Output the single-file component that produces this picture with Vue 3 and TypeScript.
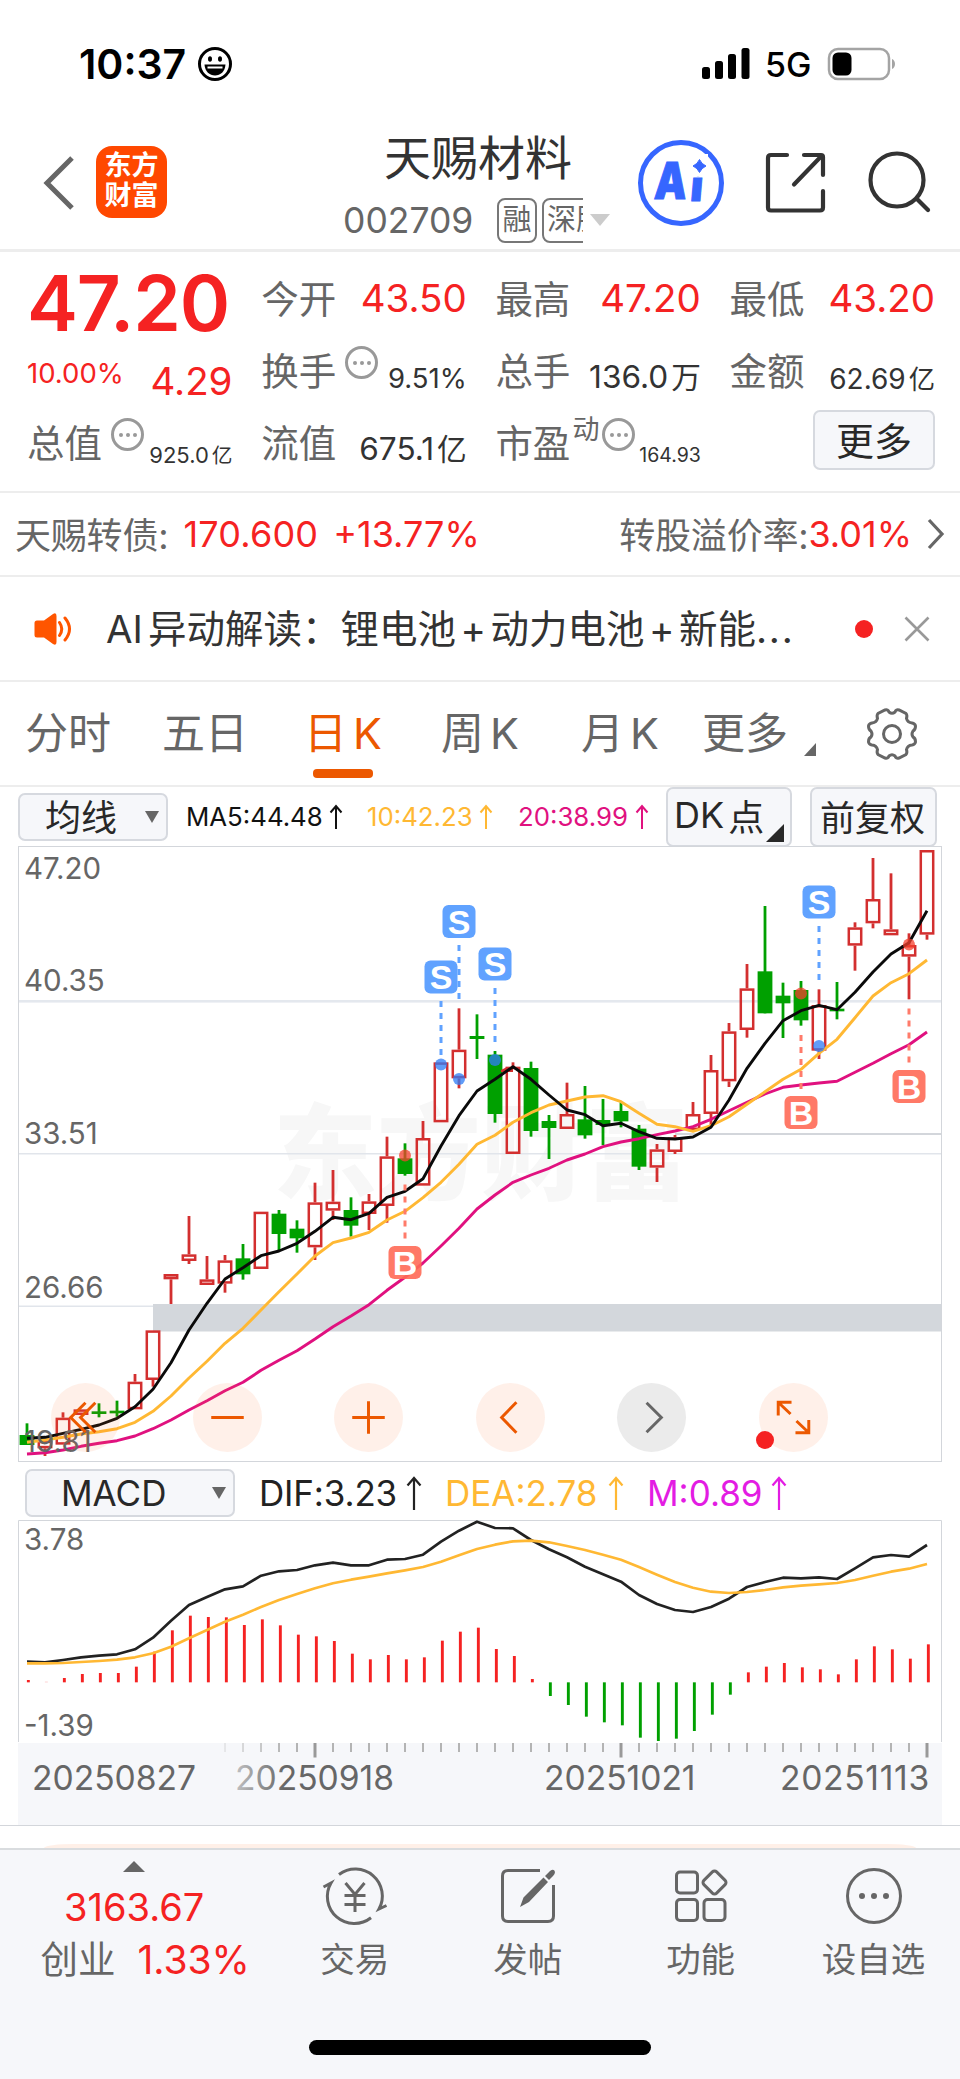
<script setup lang="ts">
type Candle = [string, number, number, number, number]

const X0 = 27
const STEP = 18
const px = (i: number): number => X0 + STEP * i
const py = (v: number): number => (v - 18) / 3
const my = (v: number): number => (v - 210) / 3

// kind, high, body top, body bottom, low (thirds of a pixel)
const candles: Candle[] = [
  ['g', 1750, 1785, 1815, 1815], ['r', 1800, 1802, 1825, 1848], ['r', 1717, 1733, 1814, 1814],
  ['r', 1708, 1708, 1725, 1725], ['g', 1690, 1714, 1722, 1732], ['g', 1682, 1712, 1720, 1730],
  ['r', 1602, 1625, 1708, 1708], ['r', 1471, 1471, 1620, 1640], ['r', 1302, 1302, 1318, 1392],
  ['r', 1128, 1243, 1263, 1272], ['r', 1248, 1318, 1335, 1335], ['r', 1245, 1261, 1331, 1358],
  ['g', 1212, 1255, 1303, 1319], ['r', 1115, 1115, 1287, 1287], ['g', 1110, 1121, 1182, 1230],
  ['g', 1141, 1166, 1195, 1238], ['r', 1028, 1087, 1222, 1260], ['r', 990, 1085, 1112, 1140],
  ['g', 1072, 1110, 1157, 1190], ['r', 1062, 1084, 1122, 1170], ['r', 890, 949, 1098, 1148],
  ['g', 910, 955, 1002, 1007], ['r', 843, 894, 1037, 1037], ['r', 667, 667, 847, 847],
  ['r', 505, 629, 715, 745], ['g', 523, 588, 597, 657], ['g', 633, 644, 822, 848],
  ['r', 667, 680, 942, 942], ['g', 665, 684, 873, 890], ['g', 825, 843, 864, 957],
  ['r', 728, 822, 867, 867], ['g', 738, 838, 886, 896], ['g', 777, 840, 855, 915],
  ['g', 787, 813, 844, 862], ['g', 855, 866, 980, 990], ['r', 912, 928, 983, 1026],
  ['r', 885, 892, 936, 942], ['r', 786, 822, 870, 870], ['r', 645, 690, 822, 858],
  ['r', 549, 574, 724, 741], ['r', 372, 445, 570, 593], ['g', 198, 394, 520, 520],
  ['g', 428, 467, 490, 594], ['g', 423, 450, 541, 557], ['r', 448, 495, 632, 657],
  ['g', 426, 506, 514, 538], ['r', 247, 262, 317, 392], ['r', 54, 177, 250, 265],
  ['r', 100, 268, 286, 286], ['r', 280, 315, 350, 478], ['r', 30, 30, 284, 299]
]

const ma5 = [1795, 1792, 1780, 1768, 1755, 1735, 1700, 1648, 1568, 1470, 1390, 1317, 1283, 1247, 1233, 1210, 1174, 1132, 1139, 1120, 1072, 1054, 1016, 918, 827, 753, 718, 680, 718, 765, 810, 824, 857, 850, 875, 895, 897, 891, 862, 780, 685, 610, 542, 512, 496, 509, 457, 396, 342, 308, 212]
const ma10 = [1807, 1800, 1792, 1782, 1775, 1766, 1747, 1714, 1668, 1614, 1564, 1510, 1465, 1410, 1355, 1302, 1248, 1208, 1194, 1177, 1140, 1114, 1073, 1027, 973, 913, 886, 847, 818, 795, 783, 771, 767, 785, 820, 853, 860, 874, 857, 830, 793, 755, 718, 688, 640, 598, 533, 468, 428, 401, 360]
const ma20 = [1842, 1838, 1830, 1819, 1810, 1802, 1788, 1766, 1740, 1710, 1682, 1652, 1627, 1591, 1561, 1532, 1497, 1460, 1428, 1394, 1351, 1312, 1269, 1218, 1165, 1107, 1065, 1027, 1005, 985, 960, 942, 920, 906, 896, 884, 873, 860, 838, 812, 787, 762, 742, 735, 729, 724, 697, 670, 641, 614, 576]
const dif = [635, 637, 630, 622, 617, 613, 598, 563, 512, 465, 441, 418, 409, 377, 364, 360, 346, 338, 346, 346, 329, 327, 314, 275, 242, 215, 234, 235, 270, 298, 322, 350, 373, 395, 435, 462, 480, 486, 471, 446, 411, 396, 383, 385, 382, 387, 355, 322, 315, 320, 285]
const dea = [640, 640, 639, 636, 633, 629, 622, 610, 590, 565, 540, 515, 494, 471, 450, 432, 415, 400, 389, 380, 370, 361, 351, 335, 316, 297, 284, 274, 272, 277, 288, 300, 314, 329, 351, 374, 396, 413, 425, 429, 426, 420, 412, 407, 403, 399, 390, 377, 365, 356, 342]
const bars = [690, 695, 684, 672, 669, 669, 650, 605, 541, 497, 501, 502, 525, 508, 526, 554, 559, 573, 611, 628, 615, 628, 622, 572, 545, 533, 597, 618, 687, 738, 765, 800, 817, 826, 863, 873, 866, 843, 794, 734, 667, 650, 639, 652, 658, 673, 628, 589, 598, 626, 583]
const BASE = 697

const line = (vals: number[], f: (v: number) => number): string =>
  vals.map((v, i) => `${px(i)},${f(v).toFixed(1)}`).join(' ')

interface Marker { k: string; x: number; y: number; from: number; dot: number }
const markers: Marker[] = [
  { k: 'S', x: 441, y: 131, from: 155, dot: 218.5 },
  { k: 'S', x: 459, y: 75.5, from: 99, dot: 233 },
  { k: 'S', x: 495, y: 118, from: 142, dot: 214 },
  { k: 'S', x: 819, y: 56, from: 80, dot: 200 },
  { k: 'B', x: 405, y: 416.5, from: 338.5, dot: 309.5 },
  { k: 'B', x: 801, y: 266.5, from: 189, dot: 147.5 },
  { k: 'B', x: 909, y: 240.5, from: 162.5, dot: 98.5 }
]

const ticks = Array.from({ length: 40 }, (_, k) => k + 11)
const tall = (i: number): boolean => i === 16 || i === 33 || i === 50

const tabs = [
  { t: '分时', c: 'a' }, { t: '五日', c: 'b' }, { t: '日', s: 'K', c: 'c' },
  { t: '周', s: 'K', c: 'd' }, { t: '月', s: 'K', c: 'e' }, { t: '更多', c: 'f' }
]
</script>

<template>
  <div class="page">
    <div class="status">
      <span class="time">10:37</span>
      <svg class="smile" width="36" height="36" viewBox="0 0 36 36">
        <circle cx="18" cy="18" r="15.5" fill="none" stroke="#000" stroke-width="3" />
        <ellipse cx="13" cy="13" rx="2" ry="2.8" /><ellipse cx="23" cy="13" rx="2" ry="2.8" />
        <path d="M7.5 18.5h21c-.5 7-5 11-10.5 11S8 25.5 7.5 18.500z" /><path d="M10.500 21.500h15" stroke="#fff" stroke-width="2" />
      </svg>
      <svg class="signal" width="50" height="32" viewBox="0 0 50 32">
        <rect x="1" y="19" width="8" height="12" rx="2.500" /><rect x="14" y="13" width="8" height="18" rx="2.500" />
        <rect x="27" y="6" width="8" height="25" rx="2.500" /><rect x="40.500" y="0" width="8" height="31" rx="2.500" />
      </svg>
      <span class="net">5G</span>
      <svg class="battery" width="70" height="34" viewBox="0 0 70 34">
        <rect x="2" y="2" width="60" height="30" rx="9" fill="none" stroke="#a4a4a4" stroke-width="2.500" />
        <rect x="5.500" y="5.500" width="19" height="23" rx="5.500" />
        <path d="M65 12c4 1.500 4 8.500 0 10z" fill="#a4a4a4" />
      </svg>
    </div>

    <div class="header">
      <svg class="back" width="40" height="60" viewBox="0 0 40 60">
        <path d="M31 6L6 31L31 56" fill="none" stroke="#666" stroke-width="5" />
      </svg>
      <div class="logo"><span>东方</span><span>财富</span></div>
      <div class="title">
        <div class="name">天赐材料</div>
        <div class="code">
          <span class="num">002709</span>
          <span class="tag">融</span>
          <span class="clip"><span class="tag">深股</span></span>
          <i class="drop"></i>
        </div>
      </div>
      <svg class="ai" width="88" height="88" viewBox="0 0 88 88">
        <circle cx="44" cy="44" r="40.500" fill="none" stroke="#3666ff" stroke-width="5" />
        <text transform="translate(16.500 60) skewX(-4) scale(0.800 1)" class="aitext">A</text>
        <text transform="translate(52.500 61.500) skewX(-5)" class="aitext sm">i</text>
        <rect x="51" y="15" width="20" height="22" fill="#fff" />
        <path d="M62.500 20.500Q64.500 25 69 27Q64.500 29 62.500 33.500Q60.500 29 56 27Q60.500 25 62.500 20.500z" fill="#3666ff" stroke="#3666ff" />
      </svg>
      <svg class="share" width="64" height="64" viewBox="0 0 64 64" fill="none" stroke="#333" stroke-width="4.200" stroke-linecap="round">
        <path d="M23 4H7Q4 4 4 7V56.500Q4 59.500 7 59.500H56Q59 59.500 59 56.500V40" /><path d="M40 4H57Q59 4 59 6V24M57 5.500L30 33.500" />
      </svg>
      <svg class="search" width="66" height="64" viewBox="0 0 66 64" fill="none" stroke="#333" stroke-width="4.200" stroke-linecap="round">
        <circle cx="30" cy="31" r="26.500" /><path d="M50 50L61 61" />
      </svg>
    </div>

    <div class="quote">
      <div class="cell big"><b>47.20</b></div>
      <div class="cell"><span class="lb">今开</span><span class="v red">43.50</span></div>
      <div class="cell"><span class="lb">最高</span><span class="v red">47.20</span></div>
      <div class="cell"><span class="lb">最低</span><span class="v red">43.20</span></div>
      <div class="cell chg"><span class="pct">10.00%</span><span class="dlt">4.29</span></div>
      <div class="cell"><span class="lb">换手</span><i class="dots"></i><span class="v s27">9.51%</span></div>
      <div class="cell"><span class="lb">总手</span><span class="v s30">136.0<em>万</em></span></div>
      <div class="cell"><span class="lb">金额</span><span class="v s28">62.69<em>亿</em></span></div>
      <div class="cell"><span class="lb">总值</span><i class="dots"></i><span class="v s21">925.0<em>亿</em></span></div>
      <div class="cell"><span class="lb">流值</span><span class="v s30">675.1<em>亿</em></span></div>
      <div class="cell"><span class="lb">市盈</span><sup>动</sup><i class="dots near"></i><span class="v s18">164.93</span></div>
      <div class="cell end"><button class="btn more">更多</button></div>
    </div>

    <div class="bond">
      <span class="k">天赐转债:</span><span class="p">170.600</span><span class="q">+13.77%</span>
      <span class="k right">转股溢价率:</span><span class="r">3.01%</span>
      <svg class="chev" width="20" height="32" viewBox="0 0 20 32"><path d="M3 2L16 16L3 30" fill="none" stroke="#666" stroke-width="3.200" /></svg>
    </div>

    <div class="news">
      <svg class="horn" width="42" height="36" viewBox="0 0 42 36">
        <path d="M4 9.500H11L20 3Q23.500 1 23.500 5V31Q23.500 35 20 33L11 26.500H4Q1.500 26.500 1.500 24V12Q1.500 9.500 4 9.500z" fill="#ff5500" />
        <path d="M26.500 11.500Q31 18 26.500 24.500M32 7Q41 18 32 29" fill="none" stroke="#ff5500" stroke-width="3" stroke-linecap="round" />
      </svg>
      <span class="msg"><span class="lat">AI</span>异动解读：<span class="sp">锂电池</span><u>+</u>动力电池<u>+</u>新能<span class="el">...</span></span>
      <i class="dot"></i>
      <svg class="close" width="26" height="26" viewBox="0 0 26 26"><path d="M1.500 1.500L24.500 24.500M24.500 1.500L1.500 24.500" stroke="#999" stroke-width="2.600" /></svg>
    </div>

    <div class="tabs">
      <div v-for="t in tabs" :key="t.c" class="tab" :class="[t.c, { on: t.c === 'c' }]">{{ t.t }}<span v-if="t.s">{{ t.s }}</span></div>
      <i class="corner"></i>
      <svg class="gear" width="52" height="54" viewBox="-26 -27 52 54" fill="none" stroke="#666" stroke-width="3">
        <path d="M-7 -24Q-4 -25 -3 -22Q0 -19.500 3 -22Q4 -25 7 -24L14 -20.500Q15.500 -19 14.500 -15.500Q15.500 -11.500 20 -11Q23 -10.500 23.500 -8Q23.500 -4 21 -3Q19 0 21 3Q23.500 4 23.500 8Q23 10.500 20 11Q15.500 11.500 14.500 15.500Q15.500 19 14 20.500L7 24Q4 25 3 22Q0 19.500 -3 22Q-4 25 -7 24L-14 20.500Q-15.500 19 -14.500 15.500Q-15.500 11.500 -20 11Q-23 10.500 -23.500 8Q-23.500 4 -21 3Q-19 0 -21 -3Q-23.500 -4 -23.500 -8Q-23 -10.500 -20 -11Q-15.500 -11.500 -14.500 -15.500Q-15.500 -19 -14 -20.500z" />
        <circle r="8.500" />
      </svg>
    </div>

    <div class="tools">
      <div class="btn avg"><span>均线</span><i class="down"></i></div>
      <span class="ma m5">MA5:44.48</span><svg class="up" viewBox="0 0 14 26"><path d="M7 25V2M1.500 8.500L7 2L12.500 8.500" /></svg>
      <span class="ma m10">10:42.23</span><svg class="up y" viewBox="0 0 14 26"><path d="M7 25V2M1.500 8.500L7 2L12.500 8.500" /></svg>
      <span class="ma m20">20:38.99</span><svg class="up p" viewBox="0 0 14 26"><path d="M7 25V2M1.500 8.500L7 2L12.500 8.500" /></svg>
      <div class="btn dk"><span>DK</span>点<i></i></div>
      <div class="btn fq">前复权</div>
    </div>

    <div class="chart">
      <svg width="960" height="616" viewBox="0 0 960 616">
        <text x="481" y="346" class="wm" text-anchor="middle">东方财富</text>
        <rect x="19" y="154" width="922.500" height="2.600" fill="#e4e8ee" />
        <rect x="19" y="307" width="922.500" height="1.500" fill="#e1e5eb" />
        <rect x="19" y="459.500" width="135" height="1.500" fill="#e1e5eb" />
        <rect x="675" y="287" width="266.500" height="2" fill="#d3d6db" />
        <rect x="153" y="458" width="789" height="27.500" fill="#d3d7dc" />
        <rect x="18.500" y="0.500" width="923" height="615" fill="none" stroke="#d3d6db" />
        <g v-for="(c, i) in candles" :key="i">
          <template v-if="c[0] === 'g'">
            <rect :x="px(i) - 1.4" :y="py(c[1])" width="2.8" :height="(c[4] - c[1]) / 3" fill="#00a000" />
            <rect :x="px(i) - 7.4" :y="py(c[2])" width="14.8" :height="(c[3] - c[2]) / 3" fill="#00a000" />
          </template>
          <template v-else>
            <rect :x="px(i) - 1.4" :y="py(c[1])" width="2.8" :height="Math.max(0, (c[2] - c[1]) / 3)" fill="#d32f2f" />
            <rect :x="px(i) - 1.4" :y="py(c[3])" width="2.8" :height="Math.max(0, (c[4] - c[3]) / 3)" fill="#d32f2f" />
            <rect :x="px(i) - 6.2" :y="py(c[2]) + 1.25" width="12.4" :height="(c[3] - c[2]) / 3 - 2.5" fill="none" stroke="#d32f2f" stroke-width="2.500" />
          </template>
        </g>
        <path d="M501 226H513V221H507L501 224z" fill="#d32f2f" />
        <g fill="none" stroke-width="2.900" stroke-linejoin="round">
          <polyline :points="line(ma20, py)" stroke="#e0117f" />
          <polyline :points="line(ma10, py)" stroke="#ffb833" />
          <polyline :points="line(ma5, py)" stroke="#0a0a0a" />
        </g>
        <g v-for="(m, j) in markers" :key="'m' + j" :class="m.k">
          <circle :cx="m.x" :cy="m.dot" r="6" class="pt" />
          <line :x1="m.x" :x2="m.x" :y1="m.from" :y2="m.from + 55" stroke-width="3" stroke-dasharray="6 6" />
          <rect :x="m.x - 16.5" :y="m.y - 16.5" width="33" height="33" rx="6" class="bx" />
          <text :x="m.x" :y="m.y + 12.2" text-anchor="middle">{{ m.k }}</text>
        </g>
        <g class="ax">
          <text x="24" y="33">47.20</text><text x="24" y="145">40.35</text>
          <text x="24" y="298">33.51</text><text x="24" y="452">26.66</text><text x="24" y="605.500">19.81</text>
        </g>
      </svg>
      <div class="ctrls">
        <div class="rb"><svg viewBox="-35 -35 70 70"><path d="M0 -15L-15 0L0 15M10 -15L-5 0L10 15" /></svg></div>
        <div class="rb"><svg viewBox="-35 -35 70 70"><path d="M-16.500 0H16.500" /></svg></div>
        <div class="rb"><svg viewBox="-35 -35 70 70"><path d="M-16.500 0H16.500M0 -16.500V16.500" /></svg></div>
        <div class="rb"><svg viewBox="-35 -35 70 70"><path d="M6 -15.500L-9 0L6 15.500" /></svg></div>
        <div class="rb gray"><svg viewBox="-35 -35 70 70"><path d="M-5 -15L10 0L-5 15" /></svg></div>
        <div class="rb"><svg viewBox="-35 -35 70 70"><path d="M-15.500 -2V-15.500H-2M-15 -15L-3 -3.500M15.500 2.500V15.500H2M15 15L3 3.500" /></svg><i class="dot"></i></div>
      </div>
    </div>

    <div class="macdbar">
      <div class="btn mc">MACD<i class="down"></i></div>
      <span class="d1">DIF:3.23</span><svg class="up" viewBox="0 0 16 34"><path d="M8 34V2M1.500 9.500L8 2L14.500 9.500" /></svg>
      <span class="d2">DEA:2.78</span><svg class="up y" viewBox="0 0 16 34"><path d="M8 34V2M1.500 9.500L8 2L14.500 9.500" /></svg>
      <span class="d3">M:0.89</span><svg class="up v" viewBox="0 0 16 34"><path d="M8 34V2M1.500 9.500L8 2L14.500 9.500" /></svg>
    </div>

    <svg class="macd" width="960" height="306" viewBox="0 0 960 306">
      <defs>
        <linearGradient id="fade" gradientUnits="userSpaceOnUse" x1="205" x2="285" y1="0" y2="0">
          <stop offset="0" stop-color="#f6f7fa" /><stop offset="1" stop-color="#f6f7fa" stop-opacity="0" />
        </linearGradient>
      </defs>
      <rect x="18" y="223" width="924" height="82" fill="#f6f7fa" />
      <path d="M18.500 222V0.500H941.500V222" fill="none" stroke="#d3d6db" />
      <rect
        v-for="(b, i) in bars" :key="i" :x="px(i) - 0.1" width="2.9"
        :y="my(Math.min(b, BASE))" :height="Math.abs(b - BASE) / 3"
        :fill="b < BASE ? '#f52222' : '#00a000'" :opacity="i === 1 ? 0.3 : 1"
      />
      <g fill="none" stroke-width="2.700" stroke-linejoin="round">
        <polyline :points="line(dif, my)" stroke="#222" />
        <polyline :points="line(dea, my)" stroke="#ffb833" />
      </g>
      <rect v-for="t in ticks" :key="'t' + t" :x="px(t) - (tall(t) ? 1.5 : 1)" y="223" :width="tall(t) ? 3 : 2" :height="tall(t) ? 14.5 : 9" :fill="tall(t) ? '#999' : '#b4b4b4'" />
      <g class="ax">
        <text x="24" y="30">3.78</text><text x="24" y="215.500">-1.39</text>
      </g>
      <g class="date">
        <text x="235" y="270">20250918</text><text x="544" y="270">20251021</text><text x="780" y="270" class="last">20251113</text>
        <rect x="205" y="223" width="80" height="80" fill="url(#fade)" />
        <text x="32" y="270">20250827</text>
      </g>
      <rect x="0" y="305" width="960" height="1" fill="#d3d6db" />
    </svg>

    <div class="gap"><div class="peach"></div></div>

    <div class="nav">
      <div class="index">
        <i class="tri"></i>
        <div class="iv">3163.67</div>
        <div class="ir"><span>创业</span><b>1.33%</b></div>
      </div>
      <div class="item i1">
        <svg width="68" height="60" viewBox="0 0 68 60" fill="none" stroke="#666" stroke-width="3">
          <path d="M18 8.500A27 27 0 0 1 58 43L65.500 39.500M50 51.800A27 27 0 0 1 10 17L2.500 21" />
          <path d="M24.500 17L34 28.500L43.500 17M34 28.500V46M23.500 29.500H44.500M23.500 38.500H44.500" />
        </svg><span>交易</span>
      </div>
      <div class="item i2">
        <svg width="60" height="60" viewBox="0 0 60 60" fill="none" stroke="#666" stroke-width="3">
          <path d="M42 4.500H10Q4.500 4.500 4.500 10V50Q4.500 55.500 10 55.500H50Q55.500 55.500 55.500 50V19" />
          <path d="M52 5Q56 2 57 6Q57 8 55 10L51 14L47 10zM45.500 11.500L50 16L31 36L22 41L25.500 31.500z" fill="#666" stroke="none" />
        </svg><span>发帖</span>
      </div>
      <div class="item i3">
        <svg width="60" height="60" viewBox="0 0 60 60" fill="none" stroke="#666" stroke-width="3">
          <rect x="5.500" y="6" width="21" height="21" rx="3.500" /><rect x="5.500" y="33.500" width="21" height="21" rx="3.500" /><rect x="33" y="33.500" width="21" height="21" rx="3.500" />
          <rect x="34.500" y="7.500" width="18" height="18" rx="3" transform="rotate(45 43.500 16.500)" />
        </svg><span>功能</span>
      </div>
      <div class="item i4">
        <svg width="60" height="60" viewBox="0 0 60 60">
          <circle cx="30" cy="30" r="26.500" fill="none" stroke="#666" stroke-width="3" />
          <g fill="#666"><circle cx="18" cy="30" r="3" /><circle cx="30" cy="30" r="3" /><circle cx="42" cy="30" r="3" /></g>
        </svg><span>设自选</span>
      </div>
    </div>
    <div class="home"><i></i></div>
  </div>
</template>

<style>
body { margin: 0; background: #fff; }
</style>

<style scoped>
.page { width: 960px; height: 2079px; overflow: hidden; background: #fff; font-family: Inter, "Noto Sans CJK SC", sans-serif; color: #666; white-space: nowrap; }
.page * { box-sizing: border-box; }
i, em { font-style: normal; }
svg { display: block; flex: none; }
.red { color: #f52222; }
.btn { background: #f6f7fa; border: 2px solid #d6d9df; border-radius: 7px; color: #282828; display: flex; align-items: center; font-family: inherit; }

.status { height: 128px; display: flex; align-items: center; padding-left: 79px; color: #000; }
.time { font-size: 41px; font-weight: 600; width: 118px; }
.signal { margin-left: 468px; }
.net { font-size: 34px; font-weight: 500; margin-left: 14px; width: 46px; }
.battery { margin-left: 16px; }

.header { height: 124px; border-bottom: 3px solid #ededed; display: flex; }
.back { margin: 24px 0 0 41px; }
.logo { margin: 18px 0 0 15px; width: 71px; height: 72px; border-radius: 16px; background: #ff4800; color: #fff; font-size: 27px; font-weight: 700; line-height: 30px; display: flex; flex-direction: column; align-items: center; padding-top: 5px; }
.title { width: 270px; margin-left: 176px; }
.name { font-size: 47px; line-height: 59px; color: #333; margin-left: 41px; }
.code { display: flex; align-items: center; height: 66px; }
.num { font-size: 35.500px; width: 154px; }
.tag { display: block; flex: none; border: 2px solid #777; border-radius: 8px; font-size: 29px; line-height: 40px; height: 45px; padding: 0 3.500px; }
.clip { width: 41px; overflow: hidden; margin-left: 5px; }
.clip .tag { width: 68px; padding-left: 3px; }
.drop { border: 10px solid transparent; border-top: 12px solid #ccc; border-bottom: 0; margin-left: 7px; }
.ai { margin: 11px 0 0 24px; }
.aitext { font: 900 51px Inter, sans-serif; fill: #3666ff; stroke: #3666ff; stroke-width: 1; }
.aitext.sm { font-size: 42px; }
.share { margin: 23px 0 0 39px; }
.search { margin: 21px 0 0 39px; }

.quote { height: 241px; border-bottom: 2px solid #ededed; padding: 10px 0 0 27px; display: grid; grid-template-columns: repeat(4, 205.500px); grid-auto-rows: 72px; column-gap: 28.700px; }
.cell { display: flex; align-items: center; height: 72px; }
.lb { font-size: 37.500px; margin-top: -4px; }
.v { margin-left: auto; font-size: 38.500px; color: #333; }
.v.red { color: #f52222; }
.big b { font-size: 76.500px; font-weight: 600; color: #f52222; margin-top: 10px; letter-spacing: -1.200px; }
.chg { color: #f52222; }
.pct { font-size: 27.500px; margin: 6px 0 0 0; }
.dlt { font-size: 38.500px; margin: 22px 0 0 auto; }
.dots { width: 33px; height: 33px; border: 3px solid #999; border-radius: 50%; margin: -15px 0 0 9px; display: flex; align-items: center; justify-content: center; }
.dots::before { content: ""; width: 4px; height: 4px; border-radius: 50%; background: #999; box-shadow: -7px 0 #999, 7px 0 #999; }
.dots.near { margin-left: 3px; }
.s27 { font-size: 27.500px; margin-top: 15px; }
.s30 { font-size: 31.600px; margin-top: 10px; }
.s28 { font-size: 28px; margin-top: 15px; }
.s21 { font-size: 22px; margin-top: 23px; }
.s18 { font-size: 19.500px; margin-top: 25px; }
em { margin-left: 3px; font-size: 0.940em; }
sup { font-size: 27px; margin: -24px 0 0 2px; line-height: 30px; vertical-align: baseline; }
.end { justify-content: flex-end; }
.more { width: 122px; height: 60px; font-size: 38px; justify-content: center; padding: 0 0 4px; margin-top: -4px; }

.bond { height: 84px; border-bottom: 2px solid #ededed; display: flex; align-items: center; padding-left: 15px; font-size: 36px; color: #f52222; }
.k { color: #666; margin-top: -3px; letter-spacing: -0.200px; }
.p { margin-left: 15px; letter-spacing: 0.200px; }
.q { margin-left: 15px; }
.right { margin-left: auto; }
.r { margin-right: 14px; }
.chev { margin-right: 14px; }

.news { height: 105px; border-bottom: 2px solid #ededed; display: flex; align-items: center; padding-left: 33px; }
.msg { margin: -5px 0 0 31px; width: 749px; font-size: 38.500px; color: #333; }
.lat { margin-right: 5px; }
.el { letter-spacing: 1.800px; }
u { text-decoration: none; margin: 0 4.500px; }
.dot { width: 18px; height: 18px; border-radius: 50%; background: #f52222; flex: none; }
.close { margin-left: 31px; }

.tabs { height: 105px; border-bottom: 2px solid #ededed; display: flex; align-items: center; padding-left: 25px; font-size: 43px; }
.tab { height: 103px; line-height: 102px; flex: none; }
.tab span { margin-left: 6px; }
.a { width: 137px; }
.b { width: 146px; }
.c { width: 137px; margin-left: -4px; }
.d { width: 140px; }
.e { width: 121px; }
.on { color: #ec5800; position: relative; }
.on::after { content: ""; position: absolute; left: 9px; top: 87px; width: 60px; height: 9px; border-radius: 4px; background: #ec5800; }
.corner { width: 0; height: 0; border-left: 12px solid transparent; border-bottom: 13px solid #666; margin: 32px 0 0 16px; }
.gear { margin-left: auto; margin-right: 42px; }

.tools { height: 59px; display: flex; align-items: center; padding-left: 18px; }
.avg { width: 150px; height: 48px; font-size: 36px; padding-left: 25px; }
.avg span { margin-top: -3px; }
.down { border: 7px solid transparent; border-top: 12px solid #666; border-bottom: 0; margin-left: auto; margin-right: 7px; }
.ma { font-size: 25.800px; color: #111; margin-left: 18px; width: 140px; }
.up { width: 14px; height: 26px; fill: none; stroke: #111; stroke-width: 2; margin-left: 3px; }
.m10 { color: #ffb833; margin-left: 24px; width: 109px; }
.m20 { color: #e0117f; margin-left: 25px; width: 114px; }
.y { stroke: #ffb833; }
.p.up { stroke: #e0117f; }
.dk { width: 126px; height: 60px; font-size: 36px; margin-left: auto; padding: 0 0 3px 6px; position: relative; }
.dk span { margin-right: 4px; }
.dk i { position: absolute; right: 6px; bottom: 3px; border-left: 18px solid transparent; border-bottom: 18px solid #282828; }
.fq { width: 127px; height: 60px; font-size: 35px; justify-content: center; margin: 0 23px 0 18px; padding: 0 2px 3px 0; }

.chart { height: 616px; position: relative; }
.wm { font: 900 104px "Noto Sans CJK SC", sans-serif; fill: #f7f7f7; }
.ax text { font-size: 29.500px; fill: #666; }
.S .bx { fill: #60a2ff; }
.S line { stroke: #60a2ff; }
.S .pt { fill: #2f7df6; opacity: 0.760; }
.B .bx { fill: #ff6a57; opacity: 0.900; }
.B line { stroke: #ff7b6a; }
.B .pt { fill: #f5402d; opacity: 0.750; }
.S text, .B text { font: 700 34px "Liberation Sans", sans-serif; fill: #fff; }
.ctrls { position: absolute; left: 51px; top: 537px; display: flex; gap: 72.500px; }
.rb { width: 69px; height: 69px; border-radius: 50%; background: rgba(255, 108, 38, 0.100); position: relative; }
.rb svg { width: 69px; height: 69px; fill: none; stroke: #ec5800; stroke-width: 3; }
.rb.gray { background: #ebebeb; }
.rb.gray svg { stroke: #666; }
.rb .dot { position: absolute; left: -3px; top: 48px; }

.macdbar { height: 58px; display: flex; align-items: center; padding: 3px 0 0 25px; font-size: 35px; }
.mc { width: 210px; height: 48px; padding-left: 34px; }
.macdbar .up { width: 16px; height: 34px; stroke: #222; stroke-width: 2.200; margin-left: 7px; }
.macdbar .y { stroke: #ffb833; }
.macdbar .v { stroke: #e31ce3; margin-left: 10px; }
.d1 { color: #222; margin-left: 24px; width: 140px; letter-spacing: -0.150px; }
.d2 { color: #ffb833; margin-left: 23px; width: 156px; }
.d3 { color: #e31ce3; margin-left: 23px; width: 114px; }
.date text { font-size: 33.600px; fill: #666; }
.date .last { letter-spacing: 0.700px; }

.gap { height: 22px; padding: 18px 44px 0; }
.peach { height: 4px; background: #fff0e8; border-radius: 30px 30px 0 0 / 4px 4px 0 0; }
.nav { height: 152px; border-top: 2px solid #d9dcdf; background: #f6f7fa; display: flex; }
.index { width: 270px; color: #f52222; display: flex; flex-direction: column; align-items: center; }
.tri { border: 11px solid transparent; border-bottom: 11px solid #666; border-top: 0; margin-top: 11px; }
.iv { font-size: 38px; line-height: 40px; margin-top: 15px; }
.ir { font-size: 39px; line-height: 44px; margin: 11px 0 0 22px; display: flex; align-items: center; }
.ir span { color: #666; font-size: 37.500px; margin-top: -1px; }
.ir b { font-weight: 400; margin-left: 22px; }
.item { width: 174px; display: flex; flex-direction: column; align-items: center; padding-top: 16px; }
.item span { font-size: 34.500px; line-height: 44px; margin-top: 12px; }
.home { height: 80px; background: #f6f7fa; padding-top: 40px; }
.home i { display: block; width: 342px; height: 15px; border-radius: 8px; background: #000; margin: 0 auto; }
</style>
